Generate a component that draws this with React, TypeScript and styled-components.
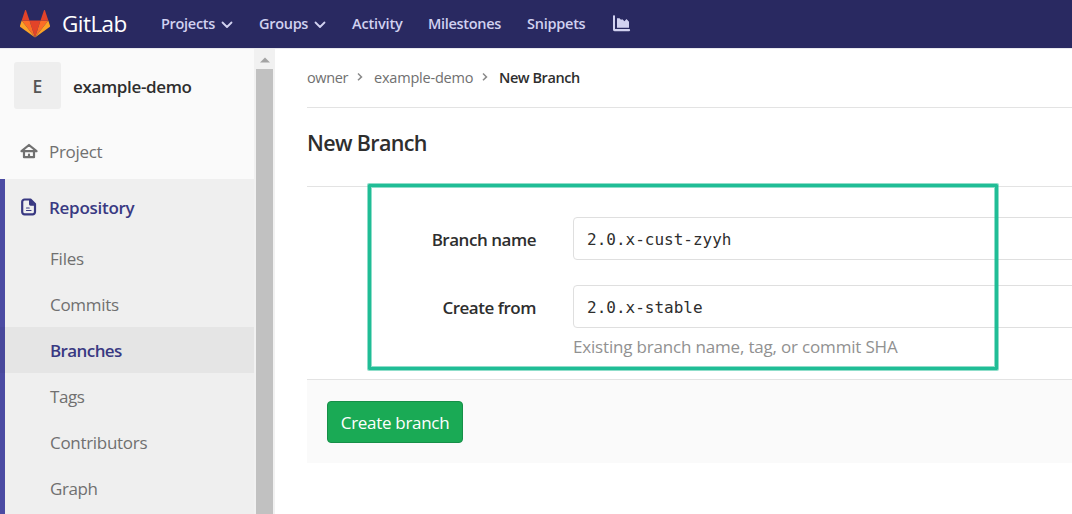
import React from 'react';
import styled, { createGlobalStyle } from 'styled-components';

const GlobalStyle = createGlobalStyle`
  *, *::before, *::after { box-sizing: border-box; }
  html, body { margin: 0; padding: 0; }
  body {
    width: 1072px;
    height: 514px;
    overflow: hidden;
    background: #fff;
    color: #2e2e2e;
    font-family: 'Open Sans', 'Noto Sans', sans-serif;
    font-size: 17px;
  }
`;

const Page = styled.div`
  display: flex;
  flex-direction: column;
  width: 1072px;
  height: 514px;
  overflow: hidden;
`;

const Header = styled.header`
  display: flex;
  align-items: center;
  flex: none;
  height: 49px;
  padding-left: 20px;
  background: #292961;
  border-bottom: 1px solid #e8e8ee;
`;

const Brand = styled.a`
  display: flex;
  align-items: center;
  width: 141px;
  gap: 12px;
`;

const Wordmark = styled.span`
  color: #fff;
  font-size: 22.5px;
  line-height: 30px;
  letter-spacing: -0.55px;
`;

const NavItem = styled.a<{ $w: number; $gap?: number; $ls?: number }>`
  display: flex;
  align-items: center;
  flex: none;
  width: ${(p) => p.$w}px;
  margin-right: ${(p) => p.$gap ?? 0}px;
  padding-bottom: 1px;
  color: #d1d1f0;
  font-size: 14.5px;
  font-weight: 600;
  line-height: 24px;
  white-space: nowrap;
  letter-spacing: ${(p) => p.$ls ?? 0}px;
  svg { margin: 2px 0 0 auto; }
`;

const Body = styled.div`
  display: flex;
  flex: 1;
  min-height: 0;
`;

const Sidebar = styled.aside`
  flex: none;
  width: 254px;
  background: #fafafa;
  overflow: hidden;
`;

const ProjectHead = styled.div`
  display: flex;
  align-items: center;
  height: 74px;
  padding: 0 0 1px 14px;
`;

const Avatar = styled.div`
  display: flex;
  align-items: center;
  justify-content: center;
  width: 47px;
  height: 47px;
  margin-right: 12px;
  padding-top: 1px;
  border-radius: 3px;
  background: #eee;
  color: #555;
  font-size: 17.5px;
  font-weight: 600;
`;

const ProjectName = styled.span`
  padding-top: 1px;
  font-size: 17px;
  font-weight: 600;
  letter-spacing: -0.35px;
  white-space: nowrap;
`;

const Label = styled.span<{ $ls?: number }>`
  letter-spacing: ${(p) => p.$ls ?? 0}px;
  white-space: nowrap;
`;

const TopItem = styled.a<{ $active?: boolean }>`
  display: flex;
  align-items: center;
  height: 56px;
  padding-left: ${(p) => (p.$active ? 15 : 20)}px;
  gap: 11px;
  color: ${(p) => (p.$active ? '#393982' : '#707070')};
  font-weight: ${(p) => (p.$active ? 600 : 400)};
  svg { flex: none; }
`;

const Section = styled.div`
  height: 340px;
  background: #efefef;
  border-left: 5px solid #4b4ba3;
`;

const SubItem = styled.a<{ $active?: boolean }>`
  display: flex;
  align-items: center;
  height: 46px;
  margin-left: -5px;
  padding-left: 50px;
  background: ${(p) => (p.$active ? 'rgba(0, 0, 0, 0.04)' : 'transparent')};
  color: ${(p) => (p.$active ? '#393982' : '#707070')};
  font-weight: ${(p) => (p.$active ? 600 : 400)};
`;

const Scrollbar = styled.div`
  display: flex;
  flex-direction: column;
  align-items: center;
  flex: none;
  width: 21px;
  background: #f1f1f1;
`;

const ScrollArrow = styled.div`
  display: flex;
  align-items: center;
  justify-content: center;
  height: 20px;
  padding-top: 1px;
`;

const ScrollThumb = styled.div`
  flex: 1;
  width: 17px;
  background: #c1c1c1;
`;

const Main = styled.main`
  flex: 1;
  min-width: 0;
  padding-left: 32px;
`;

const Breadcrumbs = styled.nav`
  display: flex;
  align-items: center;
  height: 59px;
  padding-bottom: 2px;
  border-bottom: 1px solid #e3e3e3;
  color: #707070;
  font-size: 14.5px;
`;

const Crumb = styled.span<{ $w?: number; $current?: boolean; $ls?: number }>`
  flex: none;
  width: ${(p) => (p.$w ? `${p.$w}px` : 'auto')};
  color: ${(p) => (p.$current ? '#2e2e2e' : 'inherit')};
  font-weight: ${(p) => (p.$current ? 600 : 400)};
  letter-spacing: ${(p) => p.$ls ?? 0}px;
  white-space: nowrap;
`;

const CrumbArrow = styled.svg`
  flex: none;
  margin-right: 10px;
`;

const Title = styled.h1`
  display: flex;
  align-items: center;
  height: 79px;
  margin: 0;
  padding-bottom: 9px;
  border-bottom: 1px solid #e3e3e3;
  font-size: 21.5px;
  font-weight: 600;
  letter-spacing: -0.65px;
`;

const Form = styled.form`
  display: flex;
  flex-direction: column;
  height: 192px;
  padding-top: 30px;
`;

const FormRow = styled.div`
  display: flex;
  height: 68px;
`;

const FieldLabel = styled.label`
  flex: none;
  width: 229px;
  margin-right: 37px;
  line-height: 45px;
  text-align: right;
  font-weight: 600;
  letter-spacing: -0.47px;
`;

const Field = styled.div`
  flex: none;
  width: 560px;
`;

const Input = styled.input`
  display: block;
  width: 100%;
  height: 43px;
  padding: 2px 13px 0 13px;
  border: 1px solid #dfdfdf;
  border-radius: 4px;
  outline: none;
  background: #fff;
  color: #2e2e2e;
  font-family: 'DejaVu Sans Mono', monospace;
  font-size: 16px;
`;

const Hint = styled.div`
  height: 38px;
  color: #919191;
  line-height: 38px;
  letter-spacing: -0.18px;
  white-space: nowrap;
`;

const Actions = styled.div`
  height: 84px;
  padding: 21px 20px;
  border-top: 1px solid #e3e3e3;
  background: #fafafa;
`;

const Submit = styled.button`
  display: block;
  width: 136px;
  height: 42px;
  padding: 0;
  border: 1px solid #168f48;
  border-radius: 4px;
  background: #1aaa55;
  color: #fff;
  font-family: inherit;
  font-size: 17px;
  letter-spacing: -0.3px;
  white-space: nowrap;
`;

const Highlight = styled.div`
  position: absolute;
  left: 368px;
  top: 184px;
  width: 630px;
  height: 186px;
  border: 3px solid #20bd96;
  border-radius: 1px;
  box-shadow: 0 0 0 1px rgba(32, 189, 150, 0.5), inset 0 0 0 1px rgba(32, 189, 150, 0.5);
  pointer-events: none;
`;

const Tanuki = () => (
  <svg width="30" height="28" viewBox="0 0 30 28">
    <path d="M15 27.5 20.5 10.5H9.5z" fill="#e24329" />
    <path d="M15 27.5 9.5 10.5H1.7z" fill="#fc6d26" />
    <path d="M1.7 10.5 0 15.8c-.1.5 0 1 .4 1.3L15 27.5z" fill="#fca326" />
    <path d="M1.7 10.5h7.8L6.1.4c-.2-.5-.9-.5-1.1 0z" fill="#e24329" />
    <path d="M15 27.5 20.5 10.5h7.8z" fill="#fc6d26" />
    <path d="M28.3 10.5 30 15.8c.1.5 0 1-.4 1.3L15 27.5z" fill="#fca326" />
    <path d="M28.3 10.5h-7.8L23.9.4c.2-.5.9-.5 1.1 0z" fill="#e24329" />
  </svg>
);

const Caret = () => (
  <svg width="12" height="8" viewBox="0 0 12 8">
    <path d="M1.5 1.5 6 6l4.5-4.5" fill="none" stroke="#d1d1f0" strokeWidth="1.8" strokeLinecap="round" strokeLinejoin="round" />
  </svg>
);

const AreaChart = () => (
  <svg width="18" height="18" viewBox="0 0 18 18" fill="#d1d1f0">
    <path d="M0 1.2C0 .5.4.2 1 .2S2 .5 2 1.2V14h14.2c.6 0 .9.4.9 1s-.3 1.2-.9 1.2H1.6C.6 16.2 0 15.7 0 14.6z" />
    <path d="M4 12.8V3.200H6.500L8 4.800 9.300 4.200 11.500 6.200 13.500 4 16 6.800v6z" />
  </svg>
);

const HomeIcon = () => (
  <svg width="18" height="18" viewBox="0 0 18 18" fill="none" stroke="#707070" strokeWidth="2.2" strokeLinejoin="round" strokeLinecap="round">
    <path d="M1.5 9.2 9 3l7.5 6.200z" />
    <path d="M4 9.5V15.200h10V9.500" />
    <path d="M9 12.700v1.500" />
  </svg>
);

const DocIcon = () => (
  <svg width="18" height="18" viewBox="0 0 18 18">
    <path d="M4.500 1.500h6L15 6v8a2.300 2.300 0 0 1-2.300 2.300H4.500A2.300 2.300 0 0 1 2.200 14V3.800a2.300 2.300 0 0 1 2.300-2.300z" fill="none" stroke="#393982" strokeWidth="2.200" strokeLinejoin="round" />
    <path d="M9 1.500V6c0 1 .6 1.700 1.600 1.700H15L10.500 1.500z" fill="#393982" />
    <path d="M6.500 10h2.700M6.500 12.500h4.500" stroke="#393982" strokeWidth="1.200" strokeLinecap="round" />
  </svg>
);

const Separator = () => (
  <CrumbArrow width="8" height="10" viewBox="0 0 8 10">
    <path d="M2 1.5 5.5 4.9 2 8.3" fill="none" stroke="#8a8a8a" strokeWidth="1.5" />
  </CrumbArrow>
);

const subItems = [
  { name: 'Files', ls: -0.2 },
  { name: 'Commits', ls: -0.3 },
  { name: 'Branches', ls: -0.6, active: true },
  { name: 'Tags', ls: -0.4 },
  { name: 'Contributors', ls: -0.3 },
  { name: 'Graph', ls: -0.4 },
];

export default function App() {
  return (
    <>
      <GlobalStyle />
      <Page>
        <Header>
          <Brand>
            <Tanuki />
            <Wordmark>GitLab</Wordmark>
          </Brand>
          <NavItem $w={72} $gap={26} $ls={-0.3}>Projects<Caret /></NavItem>
          <NavItem $w={67} $gap={26} $ls={-0.3}>Groups<Caret /></NavItem>
          <NavItem $w={76} $ls={-0.15}>Activity</NavItem>
          <NavItem $w={99} $ls={-0.3}>Milestones</NavItem>
          <NavItem $w={86} $ls={-0.25}>Snippets</NavItem>
          <AreaChart />
        </Header>
        <Body>
          <Sidebar>
            <ProjectHead>
              <Avatar>E</Avatar>
              <ProjectName>example-demo</ProjectName>
            </ProjectHead>
            <TopItem><HomeIcon /><Label $ls={-0.3}>Project</Label></TopItem>
            <Section>
              <TopItem $active><DocIcon /><Label $ls={-0.28}>Repository</Label></TopItem>
              {subItems.map((item) => (
                <SubItem key={item.name} $active={item.active}>
                  <Label $ls={item.ls}>{item.name}</Label>
                </SubItem>
              ))}
            </Section>
          </Sidebar>
          <Scrollbar>
            <ScrollArrow>
              <svg width="10" height="6" viewBox="0 0 10 6"><path d="M0 5.5 5 .5l5 5z" fill="#a3a3a3" /></svg>
            </ScrollArrow>
            <ScrollThumb />
          </Scrollbar>
          <Main>
            <Breadcrumbs>
              <Crumb $w={49} $ls={-0.35}>owner</Crumb>
              <Separator />
              <Crumb $w={107} $ls={-0.2}>example-demo</Crumb>
              <Separator />
              <Crumb $current $ls={-0.45}>New Branch</Crumb>
            </Breadcrumbs>
            <Title>New Branch</Title>
            <Form>
              <FormRow>
                <FieldLabel>Branch name</FieldLabel>
                <Field><Input readOnly value="2.0.x-cust-zyyh" /></Field>
              </FormRow>
              <FormRow>
                <FieldLabel>Create from</FieldLabel>
                <Field>
                  <Input readOnly value="2.0.x-stable" />
                  <Hint>Existing branch name, tag, or commit SHA</Hint>
                </Field>
              </FormRow>
            </Form>
            <Actions>
              <Submit type="button">Create branch</Submit>
            </Actions>
          </Main>
        </Body>
      </Page>
      <Highlight />
    </>
  );
}
